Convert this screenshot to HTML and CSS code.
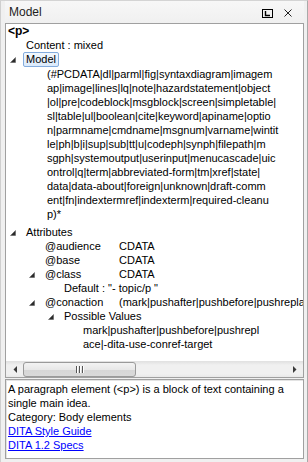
FILE: index.html
```html
<!DOCTYPE html>
<html>
<head>
<meta charset="utf-8">
<link rel="stylesheet" href="styles.css">
</head>
<body>
<div class="win">
  <div class="titlebar">
    <span class="title">Model</span>
    <span class="tb-icons">
      <svg class="ic-restore" width="11" height="9" viewBox="0 0 11 9"><rect x="0.5" y="0.5" width="10" height="8" fill="none" stroke="#000"/><path d="M3.5 2v4.5H8" fill="none" stroke="#000" stroke-width="1.4"/></svg>
      <svg class="ic-close" width="8" height="8" viewBox="0 0 8 8"><path d="M0.5 0.5L7.5 7.5M7.5 0.5L0.5 7.5" stroke="#222" stroke-width="1"/></svg>
    </span>
  </div>
  <div class="panel">
    <div class="tree">
      <div class="row lv0"><b class="root">&lt;p&gt;</b></div>
      <div class="row lv1"><span class="tw-space"></span>Content : mixed</div>
      <div class="row lv1"><span class="tw"><svg width="6" height="6" viewBox="0 0 6 6"><path d="M5.5 0.5V5.5H0.5Z" fill="#2b2b2b" stroke="#555" stroke-width="0.5"/></svg></span><span class="sel">Model</span></div>
      <div class="model-text">
        <div>(#PCDATA|dl|parml|fig|syntaxdiagram|imagem</div>
        <div>ap|image|lines|lq|note|hazardstatement|object</div>
        <div>|ol|pre|codeblock|msgblock|screen|simpletable|</div>
        <div>sl|table|ul|boolean|cite|keyword|apiname|optio</div>
        <div>n|parmname|cmdname|msgnum|varname|wintit</div>
        <div>le|ph|b|i|sup|sub|tt|u|codeph|synph|filepath|m</div>
        <div>sgph|systemoutput|userinput|menucascade|uic</div>
        <div>ontrol|q|term|abbreviated-form|tm|xref|state|</div>
        <div>data|data-about|foreign|unknown|draft-comm</div>
        <div>ent|fn|indextermref|indexterm|required-cleanu</div>
        <div>p)*</div>
      </div>
      <div class="row lv1"><span class="tw"><svg width="6" height="6" viewBox="0 0 6 6"><path d="M5.5 0.5V5.5H0.5Z" fill="#2b2b2b" stroke="#555" stroke-width="0.5"/></svg></span>Attributes</div>
      <div class="row lv2"><span class="tw-space"></span><span class="aname">@audience</span><span class="aval">CDATA</span></div>
      <div class="row lv2"><span class="tw-space"></span><span class="aname">@base</span><span class="aval">CDATA</span></div>
      <div class="row lv2"><span class="tw"><svg width="6" height="6" viewBox="0 0 6 6"><path d="M5.5 0.5V5.5H0.5Z" fill="#2b2b2b" stroke="#555" stroke-width="0.5"/></svg></span><span class="aname">@class</span><span class="aval">CDATA</span></div>
      <div class="row lv3"><span class="tw-space"></span>Default : "- topic/p "</div>
      <div class="row lv2"><span class="tw"><svg width="6" height="6" viewBox="0 0 6 6"><path d="M5.5 0.5V5.5H0.5Z" fill="#2b2b2b" stroke="#555" stroke-width="0.5"/></svg></span><span class="aname">@conaction</span><span class="aval">(mark|pushafter|pushbefore|pushreplace|-dita-use-conref-target)</span></div>
      <div class="row lv3"><span class="tw"><svg width="6" height="6" viewBox="0 0 6 6"><path d="M5.5 0.5V5.5H0.5Z" fill="#2b2b2b" stroke="#555" stroke-width="0.5"/></svg></span>Possible Values</div>
      <div class="row lv4"><span class="tw-space"></span>mark|pushafter|pushbefore|pushrepl</div>
      <div class="row lv4"><span class="tw-space"></span>ace|-dita-use-conref-target</div>
    </div>
    <div class="hscroll">
      <div class="sb-btn"><svg width="4" height="7" viewBox="0 0 4 7"><path d="M4 0V7L0.5 3.5Z" fill="#3a3a3a"/></svg></div>
      <div class="sb-track">
        <div class="sb-thumb"><span class="grip"></span><span class="grip"></span><span class="grip"></span></div>
      </div>
      <div class="sb-btn"><svg width="4" height="7" viewBox="0 0 4 7"><path d="M0 0V7L3.5 3.5Z" fill="#3a3a3a"/></svg></div>
    </div>
  </div>
  <div class="desc">
    <div>A paragraph element (&lt;p&gt;) is a block of text containing a</div>
    <div>single main idea.</div>
    <div>Category: Body elements</div>
    <div><a href="#">DITA Style Guide</a></div>
    <div><a href="#">DITA 1.2 Specs</a></div>
  </div>
</div>
</body>
</html>
```

FILE: styles.css
```css
* { box-sizing: border-box; }
html, body {
  margin: 0;
  padding: 0;
  width: 308px;
  height: 462px;
  overflow: hidden;
  background: #f0f0f0;
}
body {
  font-family: "Liberation Sans", Arial, sans-serif;
  font-size: 11px;
  color: #000;
}
.win {
  width: 308px;
  height: 462px;
  display: flex;
  flex-direction: column;
  background: #f0f0f0;
  border-left: 1px solid #cfcfcf;
  border-right: 1px solid #a9a9a9;
  border-top: 1px solid #d4d4d4;
  padding: 0 3px 3px 4px;
}
.titlebar {
  height: 22px;
  flex: none;
  display: flex;
  align-items: center;
  padding-left: 4px;
  background: linear-gradient(#f7f7f7, #f0f0f0);
}
.title {
  font-size: 12px;
  color: #1e1e1e;
  flex: 1;
}
.tb-icons {
  display: flex;
  align-items: center;
  gap: 11px;
  padding-right: 12px;
}
.ic-restore { margin-top: 3px; }
.ic-close { margin-top: 1px; }

.panel {
  height: 355px;
  flex: none;
  border: 1px solid #a0a0a0;
  background: #fff;
  display: flex;
  flex-direction: column;
}
.tree {
  flex: 1;
  overflow: hidden;
  white-space: nowrap;
}
.row {
  height: 14px;
  line-height: 14px;
  display: flex;
  align-items: center;
}
.root { font-size: 12px; }
.lv0 { padding-left: 2px; }
.lv1 { padding-left: 4px; }
.lv2 { padding-left: 23px; }
.lv3 { padding-left: 42px; }
.lv4 { padding-left: 61px; }
.tw, .tw-space {
  width: 16px;
  flex: none;
  height: 14px;
  display: flex;
  align-items: center;
}
.tw svg { margin-top: 1px; }
.sel {
  margin-left: -3px;
  padding: 0 2px 0 2px;
  border: 1px solid #84acdd;
  border-radius: 2px;
  background: linear-gradient(#f2f8fe, #dbeafb);
  line-height: 12px;
  height: 15px;
  margin-top: 1px;
}
.model-text {
  padding-left: 41px;
  line-height: 14px;
  margin-top: 1px;
  margin-bottom: 4px;
}
.aname {
  display: inline-block;
  width: 74px;
  flex: none;
}
.aval { flex: none; }

.hscroll {
  height: 16px;
  flex: none;
  display: flex;
  background: linear-gradient(#e3e3e3, #f0f0f0 20%, #f0f0f0 80%, #e8e8e8);
  border-top: 1px solid #e2e2e2;
}
.sb-btn {
  width: 17px;
  flex: none;
  display: flex;
  align-items: center;
  justify-content: center;
}
.sb-track {
  flex: 1;
  position: relative;
}
.sb-thumb {
  width: 113px;
  height: 15px;
  margin-left: 0;
  border: 1px solid #9a9a9a;
  border-radius: 3px;
  background: linear-gradient(#f3f3f3, #e8e8e8 50%, #d6d6d6 51%, #d9d9d9);
  display: flex;
  justify-content: center;
  align-items: center;
  gap: 2px;
}
.grip {
  width: 1px;
  height: 7px;
  background: #555;
  box-shadow: 1px 0 0 #fff;
}
.desc {
  flex: 1;
  margin-top: 1px;
  border: 1px solid #a0a0a0;
  box-shadow: inset 1px 1px 0 #e3e3e3;
  background: #fff;
  padding: 2px 0 0 2px;
  line-height: 14px;
  font-size: 11px;
  color: #000;
}
.desc a {
  color: #0000ff;
  text-decoration: underline;
}
```
